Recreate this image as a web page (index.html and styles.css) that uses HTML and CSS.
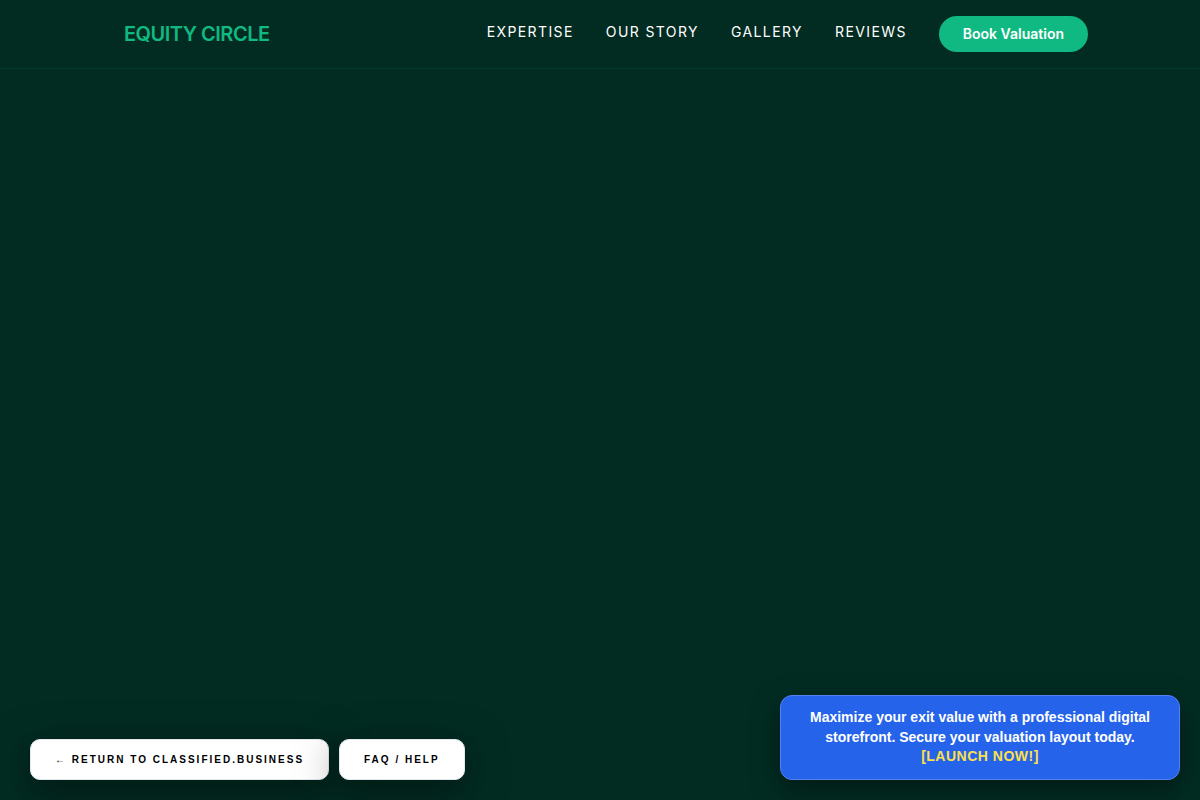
FILE: index.html
```html
<!DOCTYPE html>
<html lang="en">
<head>
  <meta charset="UTF-8">
  <meta name="viewport" content="width=device-width, initial-scale=1.0">
  <title>Equity Circle</title>
  <link rel="stylesheet" href="styles.css">
</head>
<body>

  <header class="site-header">
    <nav class="nav">
      <a href="#" class="logo">EQUITY CIRCLE</a>
      <div class="nav-links">
        <a href="#expertise" class="nav-link">EXPERTISE</a>
        <a href="#story" class="nav-link">OUR STORY</a>
        <a href="#gallery" class="nav-link">GALLERY</a>
        <a href="#reviews" class="nav-link">REVIEWS</a>
        <button type="button" class="book-btn">Book Valuation</button>
      </div>
    </nav>
  </header>

  <main></main>

  <!-- Floating bar -->
  <div class="floating-bar">
    <div class="float-links">
      <a href="#" class="float-btn">← RETURN TO CLASSIFIED.BUSINESS</a>
      <a href="#faq" class="float-btn">FAQ / HELP</a>
    </div>
    <a href="#launch" class="promo">
      Maximize your exit value with a professional digital storefront. Secure your valuation layout today.
      <span class="promo-cta">[LAUNCH NOW!]</span>
    </a>
  </div>

</body>
</html>
```
FILE: styles.css
```css
* {
  box-sizing: border-box;
}
body {
  margin: 0;
  min-height: 100vh;
  display: flex;
  flex-direction: column;
  font-family: Inter, sans-serif;
  background-color: #022c22;
  color: #ffffff;
}
main {
  flex: 1;
}
a {
  text-decoration: none;
}
.site-header {
  border-bottom: 1px solid #053c2e;
}
.nav {
  max-width: 1024px;
  margin: 0 auto;
  padding: 16px 24px;
  display: flex;
  justify-content: space-between;
  align-items: center;
}
.logo {
  padding-left: 12px;
  font-size: 20px;
  line-height: 28px;
  font-weight: 600;
  letter-spacing: -0.5px;
  color: #10b981;
}
.nav-links {
  display: flex;
  align-items: center;
  gap: 32px;
}
.nav-link {
  padding-bottom: 4px;
  font-size: 14px;
  line-height: 20px;
  letter-spacing: 1.4px;
  color: #ffffff;
}
.book-btn {
  padding: 8px 24px;
  border: none;
  border-radius: 18px;
  background-color: #10b981;
  color: #ffffff;
  font-family: inherit;
  font-size: 14px;
  line-height: 20px;
  font-weight: 600;
}

.floating-bar {
  padding: 0 20px 20px 30px;
  display: flex;
  justify-content: space-between;
  align-items: flex-end;
  font-family: "Liberation Sans", Arial, sans-serif;
  font-weight: bold;
}
.float-links {
  display: flex;
  gap: 10px;
}
.float-btn {
  padding: 14px 24px;
  border: 1px solid #e2e8f0;
  border-radius: 10px;
  background-color: #ffffff;
  color: #000000;
  font-size: 10px;
  line-height: 11px;
  letter-spacing: 2px;
  white-space: nowrap;
  box-shadow: 0 10px 40px rgba(0, 0, 0, 0.5);
}
.promo {
  width: 400px;
  padding: 11px 24px 13px;
  border: 1px solid #5182ef;
  border-radius: 12px;
  background-color: #2563eb;
  color: #ffffff;
  font-size: 14px;
  line-height: 20px;
  text-align: center;
  box-shadow: 0 10px 30px rgba(0, 0, 0, 0.4);
}
.promo-cta {
  display: block;
  line-height: 19px;
  letter-spacing: 0.5px;
  color: #fde047;
}
```
